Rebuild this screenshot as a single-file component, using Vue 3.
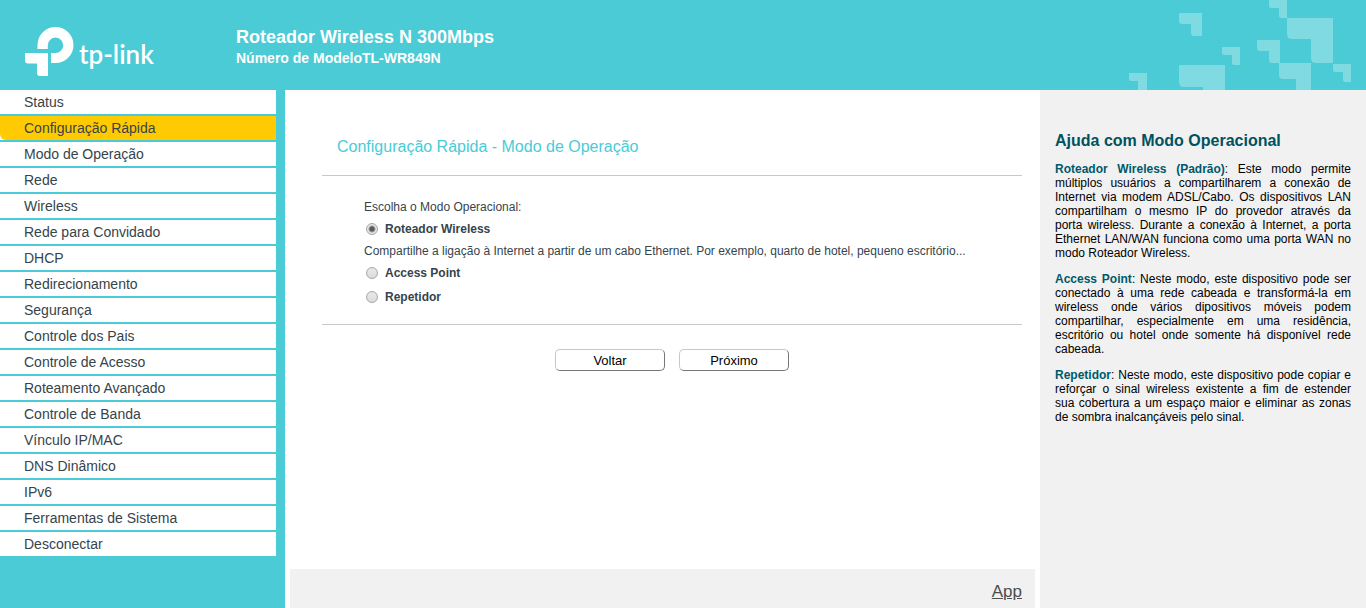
<script setup>
import { ref } from 'vue'

const menu = [
  'Status',
  'Configuração Rápida',
  'Modo de Operação',
  'Rede',
  'Wireless',
  'Rede para Convidado',
  'DHCP',
  'Redirecionamento',
  'Segurança',
  'Controle dos Pais',
  'Controle de Acesso',
  'Roteamento Avançado',
  'Controle de Banda',
  'Vínculo IP/MAC',
  'DNS Dinâmico',
  'IPv6',
  'Ferramentas de Sistema',
  'Desconectar'
]
const active = ref('Configuração Rápida')
const mode = ref('router')
</script>

<template>
  <div class="page">
    <header class="banner">
      <div class="logo">
        <svg class="mark" viewBox="0 0 49 49" aria-hidden="true">
          <path d="M12.500 22V18A18 18 0 1 1 30.500 36H26V26H30.500A7.700 7.700 0 1 0 22.800 18V22Z" />
          <path d="M0 26H23V49H15Q12 49 12 46V36.500H3Q0 36.500 0 33.500Z" />
        </svg>
        <span class="wordmark">tp-link</span>
      </div>
      <div class="titles">
        <h1>Roteador Wireless N 300Mbps</h1>
        <p>Número de ModeloTL-WR849N</p>
      </div>
      <svg class="pattern" viewBox="0 0 250 90" aria-hidden="true">
        <path d="M63 13H86V36H78Q75 36 75 33V24H66Q63 24 63 21Z" />
        <path d="M106 47H124V65H118Q116 65 116 63V55H108Q106 55 106 53Z" />
        <path d="M13 73H31V90H22V81H15Q13 81 13 79Z" />
        <path d="M63 65H109V90H87V87H68Q63 87 63 82Z" />
        <path d="M141 40H164V63H156Q153 63 153 60V51H144Q141 51 141 48Z" />
        <path d="M153 0H171V18H165Q163 18 163 16V8H155Q153 8 153 6Z" />
        <path d="M171 18H217V63H200Q195 63 195 58V39H176Q171 39 171 34Z" />
        <path d="M163 63H195V90H180V79H167Q163 79 163 75Z" />
        <path d="M217 64H235V82H229Q227 82 227 80V72H219Q217 72 217 70Z" />
      </svg>
    </header>

    <div class="body">
      <nav class="sidebar">
        <ul>
          <li v-for="item in menu" :key="item">
            <a href="#" :class="{ active: item === active }" @click.prevent="active = item">{{ item }}</a>
          </li>
        </ul>
      </nav>

      <main class="content">
        <form class="panel" @submit.prevent>
          <h2>Configuração Rápida - Modo de Operação</h2>
          <div class="modes" role="radiogroup" aria-labelledby="mode-title">
            <p id="mode-title">Escolha o Modo Operacional:</p>
            <div class="option">
              <input id="router" v-model="mode" type="radio" name="mode" value="router" />
              <label for="router">Roteador Wireless</label>
            </div>
            <p>Compartilhe a ligação à Internet a partir de um cabo Ethernet. Por exemplo, quarto de hotel, pequeno escritório...</p>
            <div class="option">
              <input id="ap" v-model="mode" type="radio" name="mode" value="ap" />
              <label for="ap">Access Point</label>
            </div>
            <div class="option last">
              <input id="repeater" v-model="mode" type="radio" name="mode" value="repeater" />
              <label for="repeater">Repetidor</label>
            </div>
          </div>
          <div class="actions">
            <button type="button">Voltar</button>
            <button type="submit">Próximo</button>
          </div>
        </form>
        <footer class="footer"><a href="#">App</a></footer>
      </main>

      <aside class="help">
        <h2>Ajuda com Modo Operacional</h2>
        <p><b>Roteador Wireless (Padrão)</b>: Este modo permite múltiplos usuários a compartilharem a conexão de Internet via modem ADSL/Cabo. Os dispositivos LAN compartilham o mesmo IP do provedor através da porta wireless. Durante a conexão à Internet, a porta Ethernet LAN/WAN funciona como uma porta WAN no modo Roteador Wireless.</p>
        <p><b>Access Point</b>: Neste modo, este dispositivo pode ser conectado à uma rede cabeada e transformá-la em wireless onde vários dipositivos móveis podem compartilhar, especialmente em uma residência, escritório ou hotel onde somente há disponível rede cabeada.</p>
        <p><b>Repetidor</b>: Neste modo, este dispositivo pode copiar e reforçar o sinal wireless existente a fim de estender sua cobertura a um espaço maior e eliminar as zonas de sombra inalcançáveis pelo sinal.</p>
      </aside>
    </div>
  </div>
</template>

<style>
body {
  margin: 0;
}
</style>

<style scoped>
.page {
  display: flex;
  flex-direction: column;
  min-height: 100vh;
  font-family: "Liberation Sans", Arial, sans-serif;
  font-size: 12px;
  color: #36444b;
  background: #fff;
}
h1,
h2,
p,
ul {
  margin: 0;
  padding: 0;
}
.banner {
  display: flex;
  height: 90px;
  background: #4acbd6;
  color: #fff;
}
.logo {
  display: flex;
  flex: none;
  box-sizing: border-box;
  width: 236px;
  padding: 27px 0 0 25px;
}
.mark {
  width: 49px;
  height: 49px;
  fill: #fff;
}
.wordmark {
  margin-left: 5px;
  padding-top: 11px;
  font: 600 26px/32px Lato, sans-serif;
}
.titles {
  flex: 1;
  padding-top: 26px;
}
.titles h1 {
  font-size: 18px;
  line-height: 22px;
}
.titles p {
  font-size: 14px;
  line-height: 20px;
  font-weight: bold;
}
.pattern {
  flex: none;
  width: 250px;
  height: 90px;
  fill: #80dae1;
}
.body {
  display: flex;
  flex: 1;
}
.sidebar {
  flex: none;
  box-sizing: border-box;
  width: 285px;
  padding-right: 9px;
  background: #4acbd6;
}
.sidebar ul {
  display: flex;
  flex-direction: column;
  gap: 2px;
  list-style: none;
}
.sidebar li {
  background: #fff;
}
.sidebar a {
  display: block;
  padding-left: 24px;
  font-size: 14px;
  line-height: 24px;
  color: #36444b;
  text-decoration: none;
}
.sidebar a.active {
  background: #ffcb00;
  border-bottom-left-radius: 6px;
}
.content {
  display: flex;
  flex: 1;
  flex-direction: column;
  min-width: 0;
}
.panel {
  flex: 1;
  padding: 43px 18px 0 37px;
}
.panel h2 {
  padding: 0 15px 14px;
  border-bottom: 1px solid #c8c8c8;
  font-size: 16px;
  line-height: 28px;
  font-weight: normal;
  color: #4acbd6;
}
.modes {
  padding: 20px 0 16px 42px;
  border-bottom: 1px solid #c8c8c8;
}
.modes p,
.option {
  line-height: 22px;
}
.option {
  display: flex;
  align-items: center;
  font-weight: bold;
}
.option.last {
  padding-top: 2px;
}
.option input {
  appearance: none;
  box-sizing: border-box;
  width: 12px;
  height: 12px;
  margin: 0 7px 0 2px;
  border: 1px solid #a6a6a6;
  border-radius: 50%;
  background: linear-gradient(#e9e9e9, #dcdcdc);
}
.option input:checked {
  background: radial-gradient(circle, #5a5a5a 0 2px, #e6e6e6 4px);
}
.actions {
  display: flex;
  justify-content: center;
  gap: 14px;
  padding-top: 24px;
}
.actions button {
  box-sizing: border-box;
  width: 110px;
  height: 22px;
  padding: 1px 0 0;
  border: 1px solid;
  border-color: #c8c8c8 #767676 #767676 #c8c8c8;
  border-radius: 5px;
  background: #fff;
  font: 13px/20px "Liberation Sans", Arial, sans-serif;
  color: #000;
}
.footer {
  box-sizing: border-box;
  height: 39px;
  margin: 0 5px;
  padding: 12px 13px 0 0;
  background: #f1f1f1;
  text-align: right;
}
.footer a {
  font: 17px/22px "Liberation Sans", Arial, sans-serif;
  color: #4d4d4d;
}
.help {
  flex: none;
  box-sizing: border-box;
  width: 326px;
  padding: 41px 15px 0;
  background: #f1f1f1;
  color: #000;
}
.help h2 {
  margin-bottom: 11px;
  font-size: 16px;
  line-height: 20px;
  color: #00525f;
}
.help p {
  margin-bottom: 12px;
  line-height: 14px;
  text-align: justify;
}
.help b {
  color: #00596b;
}
</style>
